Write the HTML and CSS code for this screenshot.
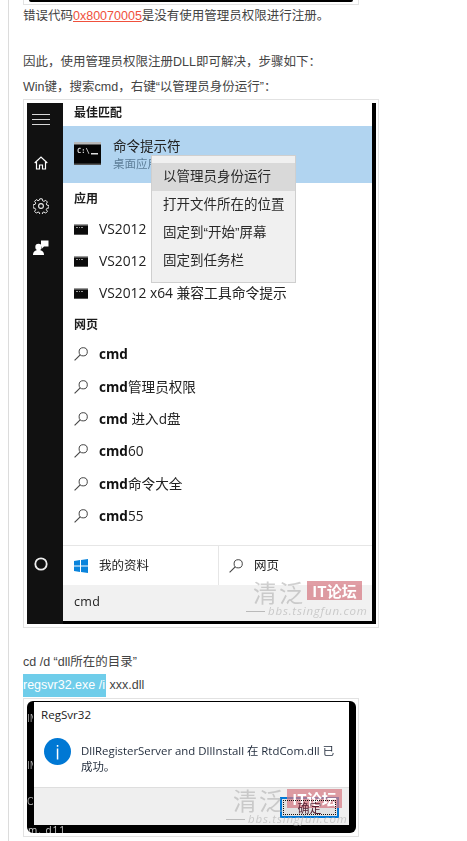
FILE: index.html
```html
<!DOCTYPE html>
<html lang="zh">
<head>
<meta charset="utf-8">
<title>注册DLL</title>
<link rel="stylesheet" href="styles.css">
</head>
<body>
<svg class="defs" width="0" height="0" aria-hidden="true">
  <symbol id="mag" viewBox="0 0 14 14"><circle cx="9.2" cy="4.8" r="4.1" fill="none" stroke="#444" stroke-width="1"/><path d="M6.2 7.8 .6 13.4" fill="none" stroke="#444" stroke-width="1.1"/></symbol>
  <symbol id="con" viewBox="0 0 14 11"><rect width="14" height="11" fill="#0c0c0c"/><rect width="14" height="1.5" fill="#9a9a9a"/><path d="M2 3.5h2M5 3.5h1M7 3.5h2" stroke="#999" stroke-width="1"/><rect x="0" y="10" width="14" height="1" fill="#555"/></symbol>
</svg>
<main class="page">
  <div class="topframe"><div class="topbar"></div></div>
  <p class="line">错误代码<a class="code" href="#">0x80070005</a>是没有使用管理员权限进行注册。</p>
  <p class="line"><br></p>
  <p class="line spaced">因此，使用管理员权限注册DLL即可解决，步骤如下：</p>
  <p class="line">Win键，搜索cmd，右键“以管理员身份运行”：</p>

  <figure class="shot search">
    <div class="shot-inner">
      <aside class="rail">
        <svg class="i-ham" width="18" height="11" viewBox="0 0 18 11"><path d="M0 .5h18M0 5.5h18M0 10.5h18" stroke="#d8d8d8" stroke-width="1"/></svg>
        <svg class="i-home" width="14" height="14" viewBox="0 0 14 14"><path d="M.7 7 7 1l6.300 6M2.500 6v7h3V9h3v4h3V6" fill="none" stroke="#fff" stroke-width="1.200"/></svg>
        <svg class="i-gear" width="16" height="16" viewBox="0 0 16 16"><circle cx="8" cy="8" r="2.400" fill="none" stroke="#eee" stroke-width="1.100"/><path d="M6.800.8h2.400l.4 2 1.300.6 1.800-1.100 1.700 1.700-1.100 1.800.6 1.300 2 .4v2.400l-2 .4-.6 1.300 1.100 1.800-1.700 1.700-1.800-1.100-1.300.6-.4 2H6.800l-.4-2-1.300-.6-1.800 1.100-1.700-1.700 1.100-1.800-.6-1.300-2-.4V6.800l2-.4.6-1.300L1.600 3.300l1.700-1.700 1.800 1.100 1.300-.6z" fill="none" stroke="#eee" stroke-width="1"/></svg>
        <svg class="i-user" width="16" height="15" viewBox="0 0 16 15"><circle cx="5.500" cy="7" r="3.200" fill="#fff"/><path d="M0 15c0-3.500 2.200-5 5.500-5s5.500 1.500 5.500 5z" fill="#fff"/><path d="M8 .5h7.500v6H11l-2 2V6.500H8z" fill="#fff"/></svg>
        <svg class="i-ring" width="14" height="14" viewBox="0 0 14 14"><circle cx="7" cy="7" r="5.700" fill="none" stroke="#eee" stroke-width="1.800"/></svg>
      </aside>
      <section class="results">
        <h3 class="head head-first">最佳匹配</h3>
        <div class="best">
          <svg class="best-icon" width="27" height="23" viewBox="0 0 27 23"><rect width="27" height="23" fill="#050505"/><rect width="27" height="2.500" fill="#b8b8b8"/><rect y="21.500" width="27" height="1.500" fill="#555"/><text x="3" y="11" class="best-prompt">C:\</text><rect x="17" y="11" width="7" height="1.500" fill="#ddd"/></svg>
          <div class="best-text">
            <div class="best-name">命令提示符</div>
            <div class="best-sub">桌面应用</div>
          </div>
        </div>
        <h3 class="head">应用</h3>
        <div class="row"><svg class="ico" width="14" height="11"><use href="#con"/></svg><span>VS2012</span></div>
        <div class="row"><svg class="ico" width="14" height="11"><use href="#con"/></svg><span>VS2012</span></div>
        <div class="row"><svg class="ico" width="14" height="11"><use href="#con"/></svg><span>VS2012 x64 兼容工具命令提示</span></div>
        <h3 class="head head-web">网页</h3>
        <div class="row q"><svg class="ico" width="14" height="14"><use href="#mag"/></svg><span><b>cmd</b></span></div>
        <div class="row q"><svg class="ico" width="14" height="14"><use href="#mag"/></svg><span><b>cmd</b>管理员权限</span></div>
        <div class="row q"><svg class="ico" width="14" height="14"><use href="#mag"/></svg><span><b>cmd</b> 进入d盘</span></div>
        <div class="row q"><svg class="ico" width="14" height="14"><use href="#mag"/></svg><span><b>cmd</b>60</span></div>
        <div class="row q"><svg class="ico" width="14" height="14"><use href="#mag"/></svg><span><b>cmd</b>命令大全</span></div>
        <div class="row q"><svg class="ico" width="14" height="14"><use href="#mag"/></svg><span><b>cmd</b>55</span></div>
        <div class="filters">
          <div class="filter mine">
            <svg class="ico" width="14" height="14" viewBox="0 0 14 14"><path d="M0 2 6 1v5.500H0zM7 .9 14 0v6.500H7zM0 7.500h6V13l-6-1zM7 7.500h7V14l-7-1z" fill="#0a84dc"/></svg>
            <span>我的资料</span>
          </div>
          <div class="filter web">
            <svg class="ico" width="14" height="14"><use href="#mag"/></svg>
            <span>网页</span>
          </div>
        </div>
        <div class="input">cmd</div>
      </section>
      <ul class="menu">
        <li class="menu-item on">以管理员身份运行</li>
        <li class="menu-item">打开文件所在的位置</li>
        <li class="menu-item">固定到“开始”屏幕</li>
        <li class="menu-item">固定到任务栏</li>
      </ul>
      <div class="mark mark-search">
        <div class="mark-top"><span class="mark-name">清泛</span><span class="mark-tag">IT论坛</span></div>
        <div class="mark-url"><i class="mark-dash"></i>bbs.tsingfun.com</div>
      </div>
    </div>
  </figure>

  <p class="line cmd-first">cd /d “dll所在的目录”</p>
  <p class="line"><span class="hl">regsvr32.exe /i</span> xxx.dll</p>

  <figure class="shot dialogshot">
    <div class="dlg-black">
      <div class="dlg">
        <div class="dlg-title">RegSvr32</div>
        <div class="dlg-body">
          <svg class="info" width="27" height="27" viewBox="0 0 27 27"><circle cx="13.500" cy="13.500" r="13.500" fill="#0078d4"/><rect x="12.800" y="7" width="1.500" height="1.800" fill="#fff"/><rect x="12.800" y="10.500" width="1.500" height="11" fill="#fff"/></svg>
          <p class="dlg-msg">DllRegisterServer and DllInstall 在 RtdCom.dll 已<br>成功。</p>
        </div>
        <div class="dlg-foot"><button class="ok" type="button"><span class="ok-in">确定</span></button></div>
      </div>
      <span class="frag frag-a">IM</span>
      <span class="frag frag-b">IM</span>
      <span class="frag frag-c">O</span>
      <span class="frag frag-d">m. d11</span>
      <div class="mark mark-dialog">
        <div class="mark-top"><span class="mark-name">清泛</span><span class="mark-tag">IT论坛</span></div>
        <div class="mark-url"><i class="mark-dash"></i>bbs.tsingfun.com</div>
      </div>
    </div>
  </figure>
</main>
</body>
</html>
```

FILE: styles.css
```css
html, body { margin: 0; padding: 0; background: #fff; }
body { height: 841px; overflow: hidden; }
.defs { position: absolute; }

.page {
  margin-left: 8px;
  height: 841px;
  padding-left: 14px;
  border-left: 1px solid #dcdcdc;
  font-family: "Liberation Sans", "Noto Sans CJK SC", sans-serif;
  font-size: 12.5px;
  line-height: 23px;
  color: #444;
}
.line { margin: 0; white-space: nowrap; }
.spaced { margin-bottom: 2px; }
.cmd-first { margin-top: 23px; }
.code { color: #f0503c; text-decoration: underline; }
.hl { display: inline-block; padding-right: 1px; background: #6fcdea; color: #fff; }

.topframe {
  width: 336px;
  height: 5px;
  box-sizing: border-box;
  padding: 0 5px;
  border: 1px solid #e2e2e2;
  border-top: 0;
}
.topbar { height: 2px; background: #000; border-radius: 0 0 3px 3px; }

.shot { margin: 0; box-sizing: border-box; border: 1px solid #e2e2e2; }
.search { width: 356px; height: 529px; padding: 3px 2px 3px 3px; }
.dialogshot { width: 336px; height: 139px; margin-top: 1px; padding: 2px 2px 3px 3px; }

/* start menu screenshot */
.shot-inner {
  position: relative;
  display: flex;
  width: 349px;
  height: 521px;
  box-sizing: border-box;
  padding-right: 4px;
  background: #000;
  filter: blur(.25px);
  font-family: "Open Sans", "Noto Sans CJK SC", sans-serif;
  color: #222;
}
.rail {
  display: flex;
  flex-direction: column;
  align-items: center;
  flex: none;
  width: 28px;
  height: 521px;
  padding-right: 8px;
  background: #111;
}
.i-ham { margin-top: 11px; }
.i-home { margin-top: 31px; }
.i-gear { margin-top: 28px; }
.i-user { margin-top: 26px; }
.i-ring { margin-top: 302px; }

.results {
  flex: 1;
  display: flex;
  flex-direction: column;
  height: 518px;
  background: #fff;
}
.head {
  margin: 0;
  flex: none;
  height: 30px;
  padding-left: 11px;
  font-size: 12px;
  font-weight: 700;
  line-height: 29px;
  color: #1c1c1c;
  font-family: "Noto Sans CJK SC", sans-serif;
}
.head-first { height: 23px; line-height: 18px; }
.head-web { height: 29px; }

.best {
  flex: none;
  display: flex;
  align-items: center;
  gap: 12px;
  height: 57px;
  box-sizing: border-box;
  padding: 0 0 2px 11px;
  background: #b1d4f0;
}
.best-icon { flex: none; }
.best-prompt { font-family: "DejaVu Sans Mono", monospace; font-size: 7px; font-weight: 700; fill: #ddd; }
.best-text { display: flex; flex-direction: column; }
.best-name { font-size: 13.5px; line-height: 20px; color: #222; font-family: "Noto Sans CJK SC", sans-serif; }
.best-sub { font-size: 11.5px; line-height: 17px; color: #5d7e98; font-family: "Noto Sans CJK SC", sans-serif; }

.row {
  flex: none;
  display: flex;
  align-items: center;
  gap: 11px;
  height: 32px;
  padding-left: 11px;
  font-size: 13.8px;
  line-height: 20px;
  white-space: nowrap;
}
.row.q { height: 32.4px; font-size: 13.6px; }
.ico { flex: none; }
.row b { font-weight: 700; color: #111; }

.filters {
  flex: none;
  display: flex;
  height: 40px;
  margin-top: 13px;
  box-sizing: border-box;
  border-top: 1px solid #e6e6e6;
  font-size: 12.5px;
}
.filter { display: flex; align-items: center; gap: 11px; }
.mine {
  width: 156px;
  box-sizing: border-box;
  padding-left: 11px;
  border-right: 1px solid #e6e6e6;
}
.web { padding-left: 10px; }
.input {
  flex: none;
  height: 36px;
  padding-left: 11px;
  background: #f1f1f1;
  font-size: 12.5px;
  line-height: 33px;
  letter-spacing: .3px;
}

.menu {
  position: absolute;
  left: 124px;
  top: 52px;
  width: 145px;
  height: 128px;
  box-sizing: border-box;
  margin: 0;
  padding: 7px 0 0;
  list-style: none;
  background: #f0f0f0;
  border: 1px solid #cfcfcf;
  font-size: 13.5px;
  font-family: "Liberation Sans", "Noto Sans CJK SC", sans-serif;
  color: #2a2a2a;
}
.menu-item { height: 28px; padding-left: 11px; line-height: 28px; white-space: nowrap; }
.menu-item.on { background: #d9d9d9; }

/* watermark */
.mark { position: absolute; z-index: 1; width: 130px; pointer-events: none; }
.mark-search { left: 219px; top: 478px; }
.mark-dialog { left: 199px; top: 88px; }
.mark-top { display: flex; align-items: flex-start; height: 22px; padding-left: 7px; }
.mark-name {
  width: 54px;
  font-family: "Noto Sans CJK SC", sans-serif;
  font-size: 24px;
  line-height: 22px;
  letter-spacing: 2px;
  color: rgba(170,170,170,.55);
  white-space: nowrap;
}
.mark-tag {
  width: 55px;
  height: 19px;
  background: rgba(214,120,130,.72);
  color: #fff;
  font-family: "Noto Sans CJK SC", sans-serif;
  font-size: 15px;
  font-weight: 700;
  line-height: 19px;
  text-align: center;
  white-space: nowrap;
}
.mark-url {
  display: flex;
  align-items: center;
  gap: 3px;
  font-family: "Open Sans", sans-serif;
  font-size: 11.5px;
  font-style: italic;
  line-height: 16px;
  letter-spacing: .8px;
  color: rgba(170,170,170,.55);
  white-space: nowrap;
}
.mark-dash { width: 19px; height: 1px; background: rgba(150,150,150,.6); }

/* dialog screenshot */
.dlg-black {
  position: relative;
  width: 329px;
  height: 132px;
  box-sizing: border-box;
  padding: 1px 7px 8px;
  overflow: hidden;
  background: #000;
  border-radius: 6px;
  filter: blur(.2px);
}
.dlg {
  display: flex;
  flex-direction: column;
  height: 123px;
  background: #fff;
  font-family: "Open Sans", "Noto Sans CJK SC", sans-serif;
  color: #222;
}
.dlg-title { height: 25px; padding-left: 7px; font-size: 11.6px; line-height: 25px; }
.dlg-body { flex: 1; display: flex; align-items: flex-start; gap: 10px; padding: 11px 0 0 10px; }
.info { flex: none; }
.dlg-msg { margin: 0; padding-top: 5px; font-size: 11.4px; line-height: 16px; color: #1f2a3a; white-space: nowrap; }
.dlg-foot {
  display: flex;
  justify-content: flex-end;
  flex: none;
  height: 38px;
  box-sizing: border-box;
  padding: 9px 10px 0 0;
  background: #efefef;
  border-top: 1px solid #dedede;
}
.ok {
  width: 59px;
  height: 21px;
  padding: 1px;
  background: #e1e1e1;
  border: 2px solid #0078d7;
  font-size: 12px;
  line-height: 1;
}
.ok-in {
  position: relative;
  z-index: 2;
  display: flex;
  align-items: center;
  justify-content: center;
  height: 100%;
  box-sizing: border-box;
  border: 1px dotted #111;
  font-family: "Noto Sans CJK SC", sans-serif;
  line-height: 13px;
  color: #552233;
}
.frag {
  position: absolute;
  font-family: "Open Sans", sans-serif;
  font-size: 10px;
  line-height: 10px;
  color: #aaa;
}
.frag-a { left: 0; top: 12px; width: 6px; overflow: hidden; }
.frag-b { left: 0; top: 59px; width: 6px; overflow: hidden; }
.frag-c { left: 0; top: 95px; width: 6px; overflow: hidden; }
.frag-d { left: 1px; top: 124px; color: #ccc; letter-spacing: 1px; }
```
